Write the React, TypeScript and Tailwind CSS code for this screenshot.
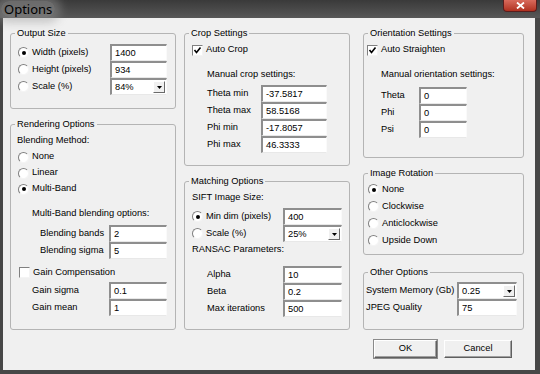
import React from "react";

function Radio({ checked }: { checked?: boolean }) {
  return (
    <span className="relative inline-block w-[11px] h-[11px] shrink-0 rounded-full bg-white border border-t-[#808080] border-l-[#808080] border-r-[#f4f4f4] border-b-[#f4f4f4]">
      {checked && <span className="absolute left-[2.5px] top-[2.5px] w-[4px] h-[4px] rounded-full bg-black" />}
    </span>
  );
}

function Check({ checked }: { checked?: boolean }) {
  return (
    <span className="relative inline-block w-[11px] h-[11px] shrink-0 bg-white border border-t-[#808080] border-l-[#808080] border-r-[#f4f4f4] border-b-[#f4f4f4]">
      {checked && (
        <svg className="absolute left-0 top-0" width="9" height="9" viewBox="0 0 9 9">
          <polyline points="1.5,4 3.5,6.5 7.5,1.5" fill="none" stroke="#000" strokeWidth="1.6" />
        </svg>
      )}
    </span>
  );
}

function Field({ value, className, dropdown }: { value: string; className: string; dropdown?: boolean }) {
  return (
    <div
      className={`relative h-[17px] shrink-0 flex items-center bg-white border-t-2 border-l-2 border-r border-b border-t-[#8e8e8e] border-l-[#8e8e8e] border-r-[#fafafa] border-b-[#e8e8e8] pl-[3px] ${className}`}
    >
      <span className="leading-[12px]">{value}</span>
      {dropdown && (
        <span className="absolute right-[1px] top-[1px] w-[12px] h-[12px] flex items-center justify-center bg-[#f0f0f0] border border-t-white border-l-white border-r-[#6a6a6a] border-b-[#6a6a6a]">
          <svg width="5" height="3" viewBox="0 0 5 3">
            <polygon points="0,0 5,0 2.5,3" fill="#000" />
          </svg>
        </span>
      )}
    </div>
  );
}

function Group({ title, className, children }: { title: string; className: string; children?: React.ReactNode }) {
  return (
    <fieldset className={`border border-[#b4b4b4] rounded-[3px] ${className}`}>
      <legend className="ml-[4px] px-[2px] leading-[12px]">{title}</legend>
      {children}
    </fieldset>
  );
}

function Row({ className, children }: { className: string; children?: React.ReactNode }) {
  return <div className={`flex items-center ${className}`}>{children}</div>;
}

export default function App() {
  return (
    <div className="w-[540px] h-[374px] bg-[#474747] flex flex-col overflow-hidden font-['Liberation_Sans',Arial,sans-serif] text-[9.3px] text-black">
      {/* title bar */}
      <div className="relative h-[18px] shrink-0 bg-gradient-to-b from-[#3a3a3a] to-[#585858] flex items-center">
        <div className="ml-[1px] px-[3px] h-[16px] flex items-center rounded-[8px] bg-[#8a8a8a]/60 shadow-[0_0_8px_6px_rgba(150,150,150,0.45)]">
          <span className="font-['Noto_Sans',sans-serif] text-[13px] leading-[14px] text-black">Options</span>
        </div>
        <div className="absolute right-[3px] top-0 w-[34px] h-[12px] rounded-b-[4px] border border-t-0 border-[#5a1c1c] bg-gradient-to-b from-[#d86a5c] to-[#b0301f] flex items-center justify-center">
          <svg width="9" height="7" viewBox="0 0 9 7">
            <path d="M1 0.5 L8 6.5 M8 0.5 L1 6.5" stroke="#fff" strokeWidth="1.8" />
          </svg>
        </div>
      </div>

      {/* client */}
      <div className="ml-[3px] mr-[5px] h-[352px] shrink-0 bg-[#f0f0f0] flex flex-col pt-[9px] pl-[7px]">
        <div className="flex items-start">
          {/* column 1 */}
          <div className="w-[166px] flex flex-col gap-[9px]">
            <Group title="Output Size" className="h-[82px]">
              <div className="mt-[5px]">
                <Row className="h-[17px] pl-[7px] pr-[8px]">
                  <Radio checked />
                  <span className="ml-[3px] flex-1">Width (pixels)</span>
                  <Field value="1400" className="w-[57px]" />
                </Row>
                <Row className="h-[17px] pl-[7px] pr-[8px]">
                  <Radio />
                  <span className="ml-[3px] flex-1">Height (pixels)</span>
                  <Field value="934" className="w-[57px]" />
                </Row>
                <Row className="h-[17px] pl-[7px] pr-[8px]">
                  <Radio />
                  <span className="ml-[3px] flex-1">Scale (%)</span>
                  <Field value="84%" className="w-[57px]" dropdown />
                </Row>
              </div>
            </Group>
            <Group title="Rendering Options" className="h-[212px]">
              <Row className="mt-[3px] h-[16px] pl-[6px]">Blending Method:</Row>
              <Row className="h-[16px] pl-[7px]">
                <Radio />
                <span className="ml-[3px]">None</span>
              </Row>
              <Row className="h-[16px] pl-[7px]">
                <Radio />
                <span className="ml-[3px]">Linear</span>
              </Row>
              <Row className="h-[16px] pl-[7px]">
                <Radio checked />
                <span className="ml-[3px]">Multi-Band</span>
              </Row>
              <Row className="mt-[9px] h-[16px] pl-[21px]">Multi-Band blending options:</Row>
              <div className="mt-[3px]">
                <Row className="h-[17px] pl-[29px] pr-[8px]">
                  <span className="flex-1">Blending bands</span>
                  <Field value="2" className="w-[58px]" />
                </Row>
                <Row className="h-[17px] pl-[29px] pr-[8px]">
                  <span className="flex-1">Blending sigma</span>
                  <Field value="5" className="w-[58px]" />
                </Row>
              </div>
              <Row className="mt-[5px] h-[17px] pl-[8px]">
                <Check />
                <span className="ml-[3px]">Gain Compensation</span>
              </Row>
              <div className="mt-[1px]">
                <Row className="h-[17px] pl-[21px] pr-[8px]">
                  <span className="flex-1">Gain sigma</span>
                  <Field value="0.1" className="w-[58px]" />
                </Row>
                <Row className="h-[17px] pl-[21px] pr-[8px]">
                  <span className="flex-1">Gain mean</span>
                  <Field value="1" className="w-[58px]" />
                </Row>
              </div>
            </Group>
          </div>

          {/* column 2 */}
          <div className="ml-[8px] w-[166px] flex flex-col gap-[9px]">
            <Group title="Crop Settings" className="h-[139px]">
              <Row className="mt-[3px] h-[16px] pl-[7px]">
                <Check checked />
                <span className="ml-[3px]">Auto Crop</span>
              </Row>
              <Row className="mt-[9px] h-[16px] pl-[22px]">Manual crop settings:</Row>
              <div className="mt-[2px]">
                {[
                  ["Theta min", "-37.5817"],
                  ["Theta max", "58.5168"],
                  ["Phi min", "-17.8057"],
                  ["Phi max", "46.3333"],
                ].map(([l, v]) => (
                  <Row key={l} className="h-[17px] pl-[22px] pr-[22px]">
                    <span className="flex-1">{l}</span>
                    <Field value={v} className="w-[66px]" />
                  </Row>
                ))}
              </div>
            </Group>
            <Group title="Matching Options" className="h-[155px]">
              <Row className="mt-[3px] h-[16px] pl-[7px]">SIFT Image Size:</Row>
              <div className="mt-[2px]">
                <Row className="h-[17px] pl-[7px] pr-[7px]">
                  <Radio checked />
                  <span className="ml-[3px] flex-1">Min dim (pixels)</span>
                  <Field value="400" className="w-[59px]" />
                </Row>
                <Row className="h-[17px] pl-[7px] pr-[7px]">
                  <Radio />
                  <span className="ml-[3px] flex-1">Scale (%)</span>
                  <Field value="25%" className="w-[59px]" dropdown />
                </Row>
              </div>
              <Row className="h-[16px] pl-[7px]">RANSAC Parameters:</Row>
              <div className="mt-[8px]">
                {[
                  ["Alpha", "10"],
                  ["Beta", "0.2"],
                  ["Max iterations", "500"],
                ].map(([l, v]) => (
                  <Row key={l} className="h-[17px] pl-[22px] pr-[7px]">
                    <span className="flex-1">{l}</span>
                    <Field value={v} className="w-[59px]" />
                  </Row>
                ))}
              </div>
            </Group>
          </div>

          {/* column 3 */}
          <div className="ml-[13px] w-[161px] flex flex-col">
            <Group title="Orientation Settings" className="h-[131px]">
              <Row className="mt-[3px] h-[16px] pl-[3px]">
                <Check checked />
                <span className="ml-[3px]">Auto Straighten</span>
              </Row>
              <Row className="mt-[9px] h-[16px] pl-[17px]">Manual orientation settings:</Row>
              <div className="mt-[4px]">
                {[
                  ["Theta", "0"],
                  ["Phi", "0"],
                  ["Psi", "0"],
                ].map(([l, v]) => (
                  <Row key={l} className="h-[17px] pl-[17px] pr-[56px]">
                    <span className="flex-1">{l}</span>
                    <Field value={v} className="w-[48px]" />
                  </Row>
                ))}
              </div>
            </Group>
            <Group title="Image Rotation" className="mt-[9px] h-[88px]">
              <div className="mt-[2px]">
                {[
                  ["None", true],
                  ["Clockwise", false],
                  ["Anticlockwise", false],
                  ["Upside Down", false],
                ].map(([l, c]) => (
                  <Row key={l as string} className="h-[17px] pl-[4px]">
                    <Radio checked={c as boolean} />
                    <span className="ml-[3px]">{l as string}</span>
                  </Row>
                ))}
              </div>
            </Group>
            <Group title="Other Options" className="mt-[11px] h-[64px]">
              <div className="mt-[4px]">
                <Row className="h-[17px] pl-[2px] pr-[6px]">
                  <span className="flex-1">System Memory (Gb)</span>
                  <Field value="0.25" className="w-[60px]" dropdown />
                </Row>
                <Row className="h-[17px] pl-[2px] pr-[6px]">
                  <span className="flex-1">JPEG Quality</span>
                  <Field value="75" className="w-[60px]" />
                </Row>
              </div>
            </Group>
          </div>
        </div>

        {/* buttons */}
        <div className="mt-[10px] flex justify-end pr-[23px] gap-[7px]">
          <div className="w-[63px] h-[18px] flex items-center justify-center bg-[#f0f0f0] border border-t-white border-l-white border-r-[#5f5f5f] border-b-[#5f5f5f] shadow-[inset_-1px_-1px_0_#a0a0a0,0_0_0_1px_#8a8a8a]">
            OK
          </div>
          <div className="w-[68px] h-[18px] flex items-center justify-center bg-[#f0f0f0] border border-t-white border-l-white border-r-[#5f5f5f] border-b-[#5f5f5f] shadow-[inset_-1px_-1px_0_#a0a0a0]">
            Cancel
          </div>
        </div>
      </div>
    </div>
  );
}
